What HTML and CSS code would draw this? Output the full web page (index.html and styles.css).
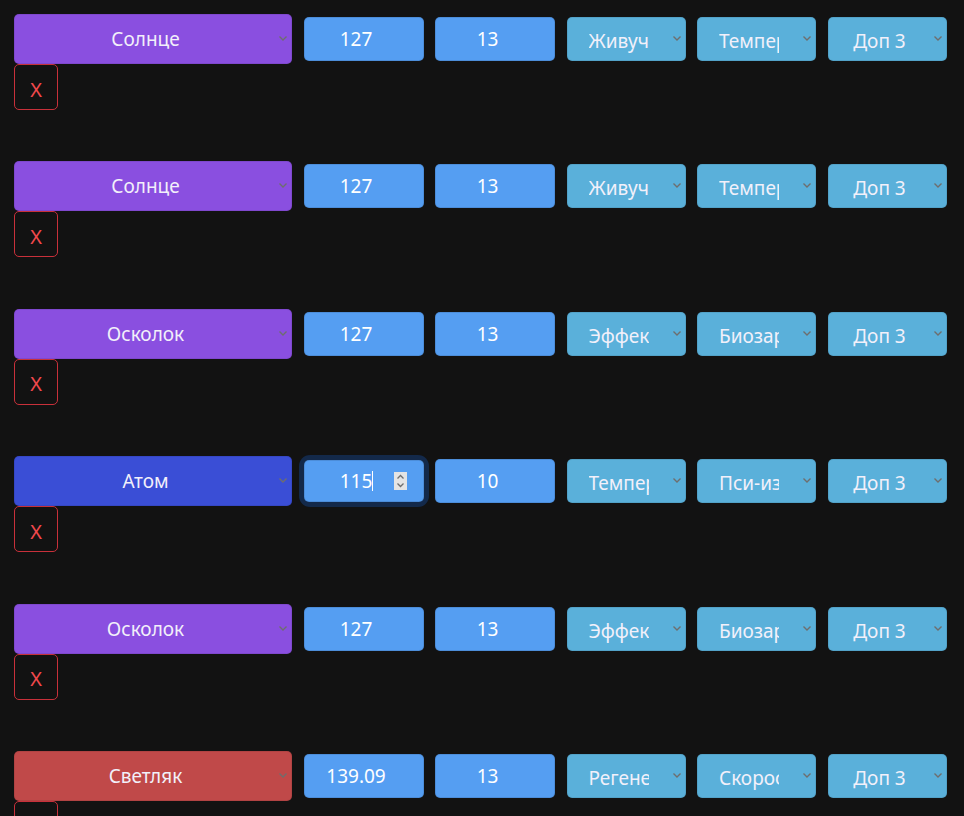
FILE: index.html
```html
<!doctype html>
<html>
<head>
<meta charset="utf-8">
<title>Отряд</title>
<link rel="stylesheet" href="styles.css">
</head>
<body>
<div id="units">

	<div class="unitRow">
		<span class="pick pickMain"><select class="unitType typeSun"><option>Солнце</option></select><svg class="chev" viewBox="0 0 8 5"><path d="M0.5 0.5 L4 4 L7.5 0.5"/></svg></span>
		<span class="field"><input type="number" class="unitStat" value="127"></span>
		<span class="field"><input type="number" class="unitStat" value="13"></span>
		<span class="pick"><select class="unitTrait"><option>Живучесть</option></select><svg class="chev" viewBox="0 0 8 5"><path d="M0.5 0.5 L4 4 L7.5 0.5"/></svg></span>
		<span class="pick"><select class="unitTrait"><option>Темперамент</option></select><svg class="chev" viewBox="0 0 8 5"><path d="M0.5 0.5 L4 4 L7.5 0.5"/></svg></span>
		<span class="pick"><select class="unitTrait"><option>Доп 3</option></select><svg class="chev" viewBox="0 0 8 5"><path d="M0.5 0.5 L4 4 L7.5 0.5"/></svg></span>
		<button class="removeButton">X</button>
	</div>

	<div class="unitRow">
		<span class="pick pickMain"><select class="unitType typeSun"><option>Солнце</option></select><svg class="chev" viewBox="0 0 8 5"><path d="M0.5 0.5 L4 4 L7.5 0.5"/></svg></span>
		<span class="field"><input type="number" class="unitStat" value="127"></span>
		<span class="field"><input type="number" class="unitStat" value="13"></span>
		<span class="pick"><select class="unitTrait"><option>Живучесть</option></select><svg class="chev" viewBox="0 0 8 5"><path d="M0.5 0.5 L4 4 L7.5 0.5"/></svg></span>
		<span class="pick"><select class="unitTrait"><option>Темперамент</option></select><svg class="chev" viewBox="0 0 8 5"><path d="M0.5 0.5 L4 4 L7.5 0.5"/></svg></span>
		<span class="pick"><select class="unitTrait"><option>Доп 3</option></select><svg class="chev" viewBox="0 0 8 5"><path d="M0.5 0.5 L4 4 L7.5 0.5"/></svg></span>
		<button class="removeButton">X</button>
	</div>

	<div class="unitRow">
		<span class="pick pickMain"><select class="unitType typeShard"><option>Осколок</option></select><svg class="chev" viewBox="0 0 8 5"><path d="M0.5 0.5 L4 4 L7.5 0.5"/></svg></span>
		<span class="field"><input type="number" class="unitStat" value="127"></span>
		<span class="field"><input type="number" class="unitStat" value="13"></span>
		<span class="pick"><select class="unitTrait"><option>Эффективность</option></select><svg class="chev" viewBox="0 0 8 5"><path d="M0.5 0.5 L4 4 L7.5 0.5"/></svg></span>
		<span class="pick"><select class="unitTrait"><option>Биозаряд</option></select><svg class="chev" viewBox="0 0 8 5"><path d="M0.5 0.5 L4 4 L7.5 0.5"/></svg></span>
		<span class="pick"><select class="unitTrait"><option>Доп 3</option></select><svg class="chev" viewBox="0 0 8 5"><path d="M0.5 0.5 L4 4 L7.5 0.5"/></svg></span>
		<button class="removeButton">X</button>
	</div>

	<div class="unitRow">
		<span class="pick pickMain"><select class="unitType typeAtom"><option>Атом</option></select><svg class="chev" viewBox="0 0 8 5"><path d="M0.5 0.5 L4 4 L7.5 0.5"/></svg></span>
		<span class="field fieldFocused"><input type="number" class="unitStat" value="115"><span class="caret"></span><svg class="spin" viewBox="0 0 13 18"><rect width="13" height="18"/><path d="M3.5 6.5 L6.5 3.5 L9.5 6.5 M3.5 11.5 L6.5 14.5 L9.5 11.5"/></svg></span>
		<span class="field"><input type="number" class="unitStat" value="10"></span>
		<span class="pick"><select class="unitTrait"><option>Темперамент</option></select><svg class="chev" viewBox="0 0 8 5"><path d="M0.5 0.5 L4 4 L7.5 0.5"/></svg></span>
		<span class="pick"><select class="unitTrait"><option>Пси-излучение</option></select><svg class="chev" viewBox="0 0 8 5"><path d="M0.5 0.5 L4 4 L7.5 0.5"/></svg></span>
		<span class="pick"><select class="unitTrait"><option>Доп 3</option></select><svg class="chev" viewBox="0 0 8 5"><path d="M0.5 0.5 L4 4 L7.5 0.5"/></svg></span>
		<button class="removeButton">X</button>
	</div>

	<div class="unitRow">
		<span class="pick pickMain"><select class="unitType typeShard"><option>Осколок</option></select><svg class="chev" viewBox="0 0 8 5"><path d="M0.5 0.5 L4 4 L7.5 0.5"/></svg></span>
		<span class="field"><input type="number" class="unitStat" value="127"></span>
		<span class="field"><input type="number" class="unitStat" value="13"></span>
		<span class="pick"><select class="unitTrait"><option>Эффективность</option></select><svg class="chev" viewBox="0 0 8 5"><path d="M0.5 0.5 L4 4 L7.5 0.5"/></svg></span>
		<span class="pick"><select class="unitTrait"><option>Биозаряд</option></select><svg class="chev" viewBox="0 0 8 5"><path d="M0.5 0.5 L4 4 L7.5 0.5"/></svg></span>
		<span class="pick"><select class="unitTrait"><option>Доп 3</option></select><svg class="chev" viewBox="0 0 8 5"><path d="M0.5 0.5 L4 4 L7.5 0.5"/></svg></span>
		<button class="removeButton">X</button>
	</div>

	<div class="unitRow">
		<span class="pick pickMain"><select class="unitType typeFirefly"><option>Светляк</option></select><svg class="chev" viewBox="0 0 8 5"><path d="M0.5 0.5 L4 4 L7.5 0.5"/></svg></span>
		<span class="field"><input type="number" class="unitStat" value="139.09"></span>
		<span class="field"><input type="number" class="unitStat" value="13"></span>
		<span class="pick"><select class="unitTrait"><option>Регенерация</option></select><svg class="chev" viewBox="0 0 8 5"><path d="M0.5 0.5 L4 4 L7.5 0.5"/></svg></span>
		<span class="pick"><select class="unitTrait"><option>Скорость</option></select><svg class="chev" viewBox="0 0 8 5"><path d="M0.5 0.5 L4 4 L7.5 0.5"/></svg></span>
		<span class="pick"><select class="unitTrait"><option>Доп 3</option></select><svg class="chev" viewBox="0 0 8 5"><path d="M0.5 0.5 L4 4 L7.5 0.5"/></svg></span>
		<button class="removeButton">X</button>
	</div>

</div>
</body>
</html>
```

FILE: styles.css
```css
body {
	margin: 0;
	padding: 14px 14px 0px 14px;
	background-color: rgb(18,18,18);
	font-family: "Noto Sans", "Open Sans", sans-serif;
	font-size: 19px;
	overflow: hidden;
}

.unitRow {
	display: flex;
	flex-wrap: wrap;
	align-items: center;
	column-gap: 11.5px;
	margin-bottom: 51.4px;
}

.pick {
	position: relative;
	display: block;
	width: 119px;
	height: 44px;
}

.pickMain {
	width: 278px;
	height: 50px;
}

select {
	appearance: none;
	-webkit-appearance: none;
	display: block;
	box-sizing: border-box;
	width: 100%;
	height: 100%;
	margin: 0;
	padding: 0px 36px 0px 21px;
	font-family: inherit;
	font-size: 19px;
	text-align: center;
	text-align-last: center;
	color: rgb(242,240,250);
	border: 1px solid rgba(0,0,0,0.08);
	border-radius: 5px;
	outline: none;
}

.unitTrait {
	padding-top: 4px;
	background-color: rgb(90,176,218);
}

.typeSun, .typeShard {
	background-color: rgb(138,79,224);
}

.typeAtom {
	background-color: rgb(58,78,214);
}

.typeFirefly {
	background-color: rgb(192,73,73);
}

.chev {
	position: absolute;
	right: 5px;
	top: 50%;
	width: 8px;
	height: 5px;
	margin-top: -3px;
	fill: none;
	stroke: rgb(110,110,110);
	stroke-width: 1.4;
}

.field {
	position: relative;
	display: block;
	width: 120px;
	height: 44px;
	border-radius: 5px;
}

.fieldFocused {
	height: 42px;
	box-shadow: 0 0 0 5px rgb(19,41,74);
	border-radius: 6px;
}

.unitStat {
	appearance: textfield;
	-moz-appearance: textfield;
	display: block;
	box-sizing: border-box;
	width: 100%;
	height: 100%;
	margin: 0;
	padding: 0px 25px 0px 10px;
	font-family: inherit;
	font-size: 19px;
	text-align: center;
	color: rgb(255,255,255);
	background-color: rgb(85,158,242);
	border: 1px solid rgba(0,0,0,0.1);
	border-radius: 5px;
	outline: none;
}

.unitStat::-webkit-inner-spin-button,
.unitStat::-webkit-outer-spin-button {
	-webkit-appearance: none;
	margin: 0;
}

.caret {
	position: absolute;
	left: 68px;
	top: 11px;
	width: 1px;
	height: 20px;
	background-color: rgb(255,255,255);
}

.spin {
	position: absolute;
	left: 90px;
	top: 12px;
	width: 13px;
	height: 18px;
}

.spin rect {
	fill: rgb(228,228,228);
}

.spin path {
	fill: none;
	stroke: rgb(110,110,110);
	stroke-width: 1.3;
}

.removeButton {
	display: block;
	box-sizing: border-box;
	width: 44px;
	height: 46px;
	margin: 0;
	padding: 4px 0px 0px 0px;
	font-family: inherit;
	font-size: 20px;
	color: rgb(240,72,76);
	background-color: transparent;
	border: 1px solid rgb(200,48,58);
	border-radius: 5px;
	cursor: pointer;
}
```
